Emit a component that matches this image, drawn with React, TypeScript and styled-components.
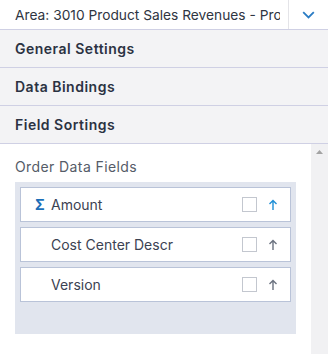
import styled, { createGlobalStyle } from 'styled-components';

const GlobalStyle = createGlobalStyle`
  html, body {
    margin: 0;
    padding: 0;
    background: #ffffff;
    font-family: Inter, "Noto Sans", sans-serif;
  }
`;

const Panel = styled.div`
  width: 328px;
  height: 354px;
  display: flex;
  flex-direction: column;
  overflow: hidden;
  background: #ffffff;
`;

const Select = styled.div`
  height: 30px;
  display: flex;
  border-bottom: 1px solid #cfd0e4;
  box-sizing: border-box;
`;

const SelectValue = styled.div`
  width: 289px;
  padding: 0 8px 0 15px;
  box-sizing: border-box;
  border-right: 1px solid #e4e4e8;
`;

const SelectText = styled.div`
  font-size: 13.75px;
  line-height: 30px;
  color: #2f3542;
  white-space: nowrap;
  overflow: hidden;
`;

const SelectButton = styled.div`
  flex: 1;
  display: flex;
  align-items: center;
  justify-content: center;
`;

const SectionHeader = styled.div`
  height: 38px;
  display: flex;
  align-items: center;
  padding-left: 15px;
  background: #f3f3f5;
  border-bottom: 1px solid #cfd0e4;
  font-size: 14px;
  font-weight: 600;
  letter-spacing: 0.5px;
  color: #2b3242;
  box-sizing: border-box;
`;

const Content = styled.div`
  flex: 1;
  display: flex;
`;

const Body = styled.div`
  flex: 1;
  padding: 14px 15px 0 15px;
`;

const Label = styled.div`
  font-size: 14px;
  letter-spacing: 0.4px;
  color: #555c68;
  line-height: 18px;
  margin-bottom: 6px;
`;

const FieldList = styled.div`
  width: 281px;
  height: 152px;
  box-sizing: border-box;
  padding: 5px;
  background: #e1e5ee;
  display: flex;
  flex-direction: column;
  gap: 5px;
`;

const FieldItem = styled.div`
  height: 35px;
  box-sizing: border-box;
  background: #ffffff;
  border: 1px solid #b9c3d8;
  display: flex;
  align-items: center;
  padding: 0 12px 0 14px;
`;

const Sigma = styled.span`
  width: 16px;
  font-size: 14px;
  font-weight: 700;
  color: #1d6fb8;
`;

const FieldName = styled.span`
  flex: 1;
  font-size: 14px;
  color: #3b4252;
`;

const Checkbox = styled.span`
  width: 13px;
  height: 13px;
  border: 1px solid #c3c7cf;
  background: #ffffff;
  margin-right: 11px;
`;

const ScrollTrack = styled.div`
  width: 17px;
  background: #f1f1f3;
  display: flex;
  justify-content: center;
  padding-top: 6px;
`;

const fields = [
  { name: 'Amount', measure: true },
  { name: 'Cost Center Descr', measure: false },
  { name: 'Version', measure: false },
];

function SortArrow({ active }: { active: boolean }) {
  const color = active ? '#1f8fd6' : '#6b7280';
  return (
    <svg width="10" height="12" viewBox="0 0 10 12">
      <path d="M5 11V1.5M1.5 5L5 1.5L8.5 5" stroke={color} strokeWidth="1.4" fill="none" />
    </svg>
  );
}

export default function App() {
  return (
    <>
      <GlobalStyle />
      <Panel>
        <Select>
          <SelectValue>
            <SelectText>Area: 3010 Product Sales Revenues - Product Sales Revenues</SelectText>
          </SelectValue>
          <SelectButton>
            <svg width="13" height="8" viewBox="0 0 13 8">
              <path d="M1.2 1.2L6.5 6.4L11.8 1.2" stroke="#2a7cc4" strokeWidth="1.8" fill="none" />
            </svg>
          </SelectButton>
        </Select>
        <SectionHeader>General Settings</SectionHeader>
        <SectionHeader>Data Bindings</SectionHeader>
        <SectionHeader>Field Sortings</SectionHeader>
        <Content>
          <Body>
            <Label>Order Data Fields</Label>
            <FieldList>
              {fields.map((f) => (
                <FieldItem key={f.name}>
                  <Sigma>{f.measure ? 'Σ' : ''}</Sigma>
                  <FieldName>{f.name}</FieldName>
                  <Checkbox />
                  <SortArrow active={f.measure} />
                </FieldItem>
              ))}
            </FieldList>
          </Body>
          <ScrollTrack>
            <svg width="7" height="4" viewBox="0 0 7 4">
              <path d="M0 4L3.5 0L7 4Z" fill="#a3a3a3" />
            </svg>
          </ScrollTrack>
        </Content>
      </Panel>
    </>
  );
}
